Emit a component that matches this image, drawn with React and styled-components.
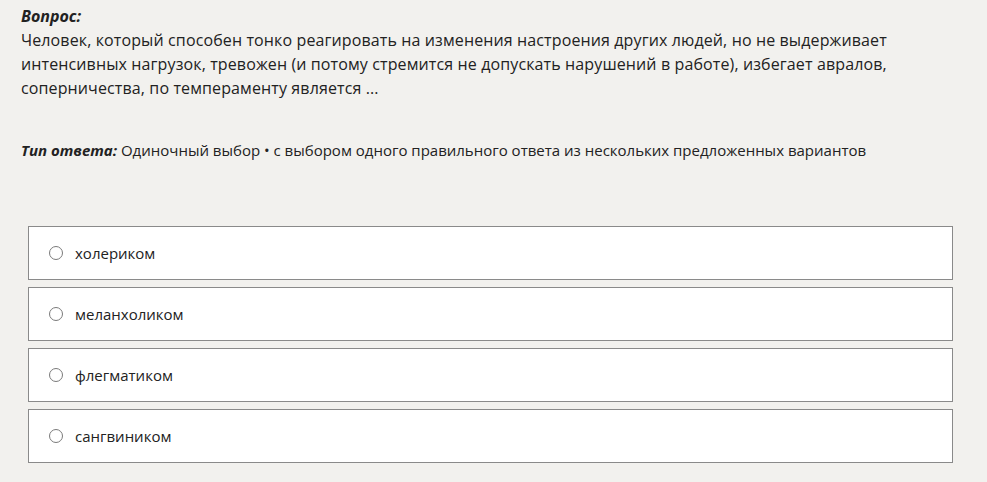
import React from "react";
import styled, { createGlobalStyle } from "styled-components";

const Global = createGlobalStyle`
  html, body { margin: 0; padding: 0; background: #f2f1ee; }
  body { font-family: "Segoe UI", "Open Sans", "Noto Sans", sans-serif; color: #222; }
`;

const Page = styled.div`
  padding: 4px 34px 0 21px;
`;

const Label = styled.span`
  font-weight: 700;
  font-style: italic;
  letter-spacing: 0;
`;

const Question = styled.div`
  font-size: 16px;
  line-height: 24px;
  letter-spacing: 0.12px;
`;

const AnswerType = styled.div`
  margin-top: 38px;
  font-size: 15px;
  line-height: 24px;
`;

const Options = styled.div`
  margin: 64px 0 0 7px;
  display: flex;
  flex-direction: column;
  gap: 7px;
`;

const Option = styled.label`
  height: 52px;
  border: 1px solid #8a8a8a;
  background: #fff;
  display: flex;
  align-items: center;
  padding-left: 20px;
  font-size: 15px;
  cursor: pointer;
`;

const Radio = styled.span`
  width: 12px;
  height: 12px;
  border: 1px solid #7a7a7a;
  border-radius: 50%;
  margin-right: 12px;
  box-sizing: content-box;
`;

const options = ["холериком", "меланхоликом", "флегматиком", "сангвиником"];

export default function App() {
  return (
    <>
      <Global />
      <Page>
        <Question>
          <Label>Вопрос:</Label>
          <div>
            Человек, который способен тонко реагировать на изменения настроения других людей, но не выдерживает интенсивных нагрузок, тревожен (и потому стремится не допускать нарушений в работе), избегает авралов, соперничества, по темпераменту является ...
          </div>
        </Question>
        <AnswerType>
          <Label>Тип ответа:</Label> Одиночный выбор • с выбором одного правильного ответа из нескольких предложенных вариантов
        </AnswerType>
        <Options>
          {options.map((o) => (
            <Option key={o}>
              <Radio />
              {o}
            </Option>
          ))}
        </Options>
      </Page>
    </>
  );
}
